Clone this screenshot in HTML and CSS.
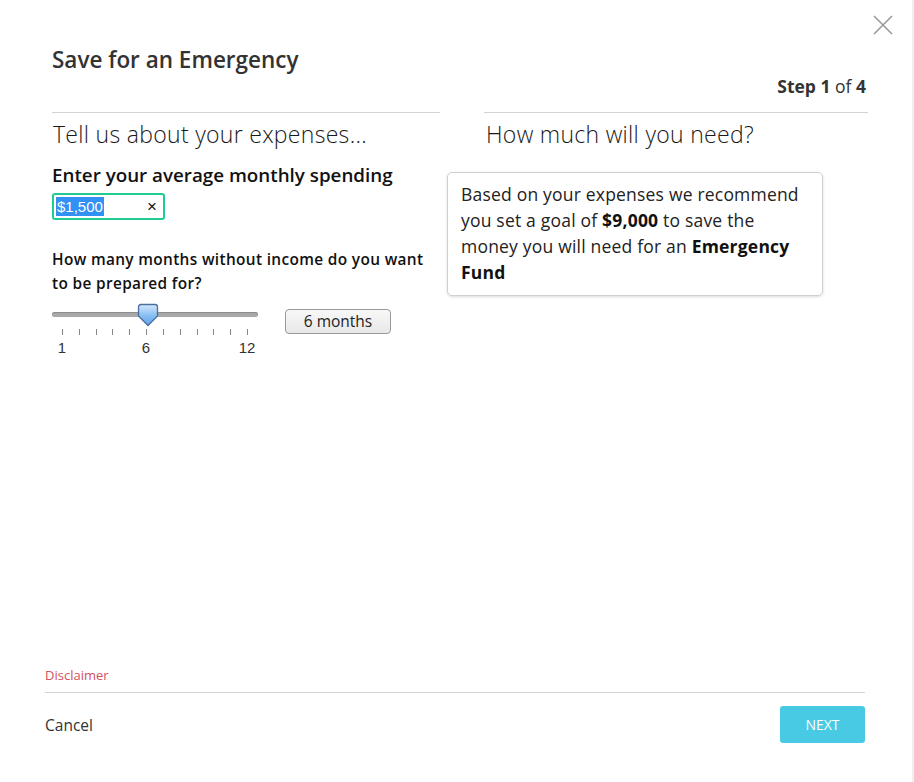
FILE: index.html
```html
<!DOCTYPE html>
<html>
<head>
<meta charset="utf-8">
<link rel="stylesheet" href="styles.css">
</head>
<body>
<div class="modal">
  <button class="close" aria-label="Close">
    <svg width="20" height="20" viewBox="0 0 20 20"><path d="M1 1L19 19M19 1L1 19" stroke="#9a9a9a" stroke-width="1.6" fill="none"/></svg>
  </button>
  <header class="head">
    <h1 class="title">Save for an Emergency</h1>
    <div class="step"><b>Step 1</b> of <b>4</b></div>
  </header>
  <div class="cols">
    <section class="col left">
      <h2 class="colhead">Tell us about your expenses...</h2>
      <div class="label">Enter your average monthly spending</div>
      <div class="input"><span class="sel">$1,500</span><span class="clear">×</span></div>
      <div class="question">How many months without income do you want to be prepared for?</div>
      <div class="sliderrow">
        <div class="slider">
          <div class="track">
            <svg class="thumb" width="22" height="24" viewBox="0 0 22 24">
              <defs>
                <linearGradient id="tg" x1="0" y1="0" x2="0" y2="1">
                  <stop offset="0" stop-color="#d4e8fb"/>
                  <stop offset="0.5" stop-color="#8cc0f3"/>
                  <stop offset="1" stop-color="#5aa4ef"/>
                </linearGradient>
              </defs>
              <path d="M4 1.5H18Q20.5 1.5 20.5 4V13L11 22.5L1.5 13V4Q1.5 1.5 4 1.5Z" fill="url(#tg)" stroke="#4a6f9c" stroke-width="1.3"/>
            </svg>
          </div>
          <div class="ticks">
            <i></i><i></i><i></i><i></i><i></i><i></i><i></i><i></i><i></i><i></i><i></i><i></i>
          </div>
          <div class="nums"><span class="n1">1</span><span class="n6">6</span><span class="n12">12</span></div>
        </div>
        <div class="monthsbtn">6 months</div>
      </div>
    </section>
    <section class="col right">
      <h2 class="colhead">How much will you need?</h2>
      <div class="callout">Based on your expenses we recommend you set a goal of <b>$9,000</b> to save the money you will need for an <b>Emergency Fund</b></div>
    </section>
  </div>
  <footer class="foot">
    <a class="disclaimer">Disclaimer</a>
    <div class="actions">
      <a class="cancel">Cancel</a>
      <button class="next">NEXT</button>
    </div>
  </footer>
</div>
</body>
</html>
```
FILE: styles.css
```css
html, body {
  margin: 0;
  padding: 0;
  background: #fff;
}
body {
  font-family: "Open Sans", "Noto Sans", sans-serif;
  color: #222;
}
.modal {
  position: relative;
  box-sizing: border-box;
  width: 914px;
  height: 782px;
  border-right: 2px solid #f0f0f0;
  display: flex;
  flex-direction: column;
}
.close {
  position: absolute;
  top: 15px;
  right: 19px;
  border: 0;
  background: none;
  padding: 0;
  width: 20px;
  height: 20px;
}
.head {
  padding: 45px 46px 0 52px;
}
.title {
  margin: 0;
  font-size: 22.5px;
  font-weight: 600;
  color: #333;
  line-height: 30px;
}
.step {
  text-align: right;
  font-size: 17.5px;
  color: #333;
  line-height: 22px;
  margin-top: 0;
}
.step b {
  font-weight: 700;
}
.cols {
  display: flex;
  gap: 44px;
  padding: 15px 0 0 52px;
}
.col {
  border-top: 1.5px solid #d4d4d4;
}
.left { width: 388px; }
.right { width: 384px; }
.colhead {
  margin: 0;
  font-weight: 300;
  font-size: 23px;
  letter-spacing: 0.3px;
  line-height: 30px;
  margin-top: 6px;
  color: #1a1a1a;
  white-space: nowrap;
}
.left .colhead { padding-left: 1px; }
.right .colhead { padding-left: 2px; }
.label {
  margin-top: 14px;
  font-size: 18.8px;
  font-weight: 600;
  color: #111;
  line-height: 24px;
  white-space: nowrap;
}
.input {
  box-sizing: border-box;
  margin-top: 6px;
  width: 113px;
  height: 27px;
  border: 2px solid #1fcc8e;
  border-radius: 3px;
  display: flex;
  align-items: center;
  justify-content: space-between;
  padding: 0 6px 0 2px;
  font-family: "Liberation Sans", Arial, sans-serif;
  font-size: 15px;
}
.sel {
  background: #3390f5;
  color: #fff;
  line-height: 19px;
  padding: 0 1px;
}
.clear {
  font-size: 17px;
  color: #111;
}
.question {
  margin-top: 28px;
  font-size: 15.4px;
  font-weight: 600;
  letter-spacing: 0.35px;
  line-height: 24px;
  color: #111;
}
.sliderrow {
  display: flex;
  align-items: flex-start;
  gap: 27px;
  margin-top: 10px;
}
.slider {
  width: 206px;
}
.track {
  position: relative;
  height: 5px;
  margin-top: 6px;
  background: #a9a9a9;
  border-radius: 3px;
  box-shadow: inset 0 1px 1px #8a8a8a;
}
.thumb {
  position: absolute;
  left: 85px;
  top: -9px;
}
.ticks {
  display: flex;
  justify-content: space-between;
  padding: 0 10px;
  margin-top: 12px;
}
.ticks i {
  display: block;
  width: 1px;
  height: 6px;
  background: #888;
}
.nums {
  display: flex;
  font-family: "Liberation Sans", Arial, sans-serif;
  font-size: 15px;
  color: #333;
  line-height: 18px;
  margin-top: 4px;
}
.nums span {
  width: 20px;
  text-align: center;
}
.nums .n6 { margin-left: 64px; }
.nums .n12 { margin-left: 81px; }
.monthsbtn {
  box-sizing: border-box;
  width: 106px;
  height: 25px;
  border: 1px solid #9a9a9a;
  border-radius: 4px;
  background: linear-gradient(#f8f8f8, #e8e8e8);
  text-align: center;
  font-size: 15.5px;
  line-height: 23px;
  color: #222;
  margin-top: 3px;
}
.callout {
  margin: 23px 0 0 -37px;
  width: 376px;
  box-sizing: border-box;
  border: 1px solid #d0d0d0;
  border-radius: 5px;
  box-shadow: 0 1px 3px rgba(0,0,0,0.15);
  padding: 8px 20px 10px 13px;
  font-size: 17.5px;
  letter-spacing: 0.2px;
  line-height: 26px;
  color: #222;
}
.callout b { color: #111; font-weight: 700; }
.foot {
  margin-top: auto;
  padding: 0 47px 39px 45px;
}
.disclaimer {
  display: block;
  color: #d4505e;
  font-size: 13px;
  line-height: 18px;
  padding-bottom: 8px;
  border-bottom: 1.5px solid #d4d4d4;
}
.actions {
  display: flex;
  justify-content: space-between;
  align-items: center;
  margin-top: 13px;
}
.cancel {
  font-size: 15.5px;
  color: #333;
}
.next {
  width: 85px;
  height: 37px;
  border: 0;
  border-radius: 3px;
  background: #48cae4;
  color: #fff;
  font-family: "Open Sans", sans-serif;
  font-size: 14px;
}
```
